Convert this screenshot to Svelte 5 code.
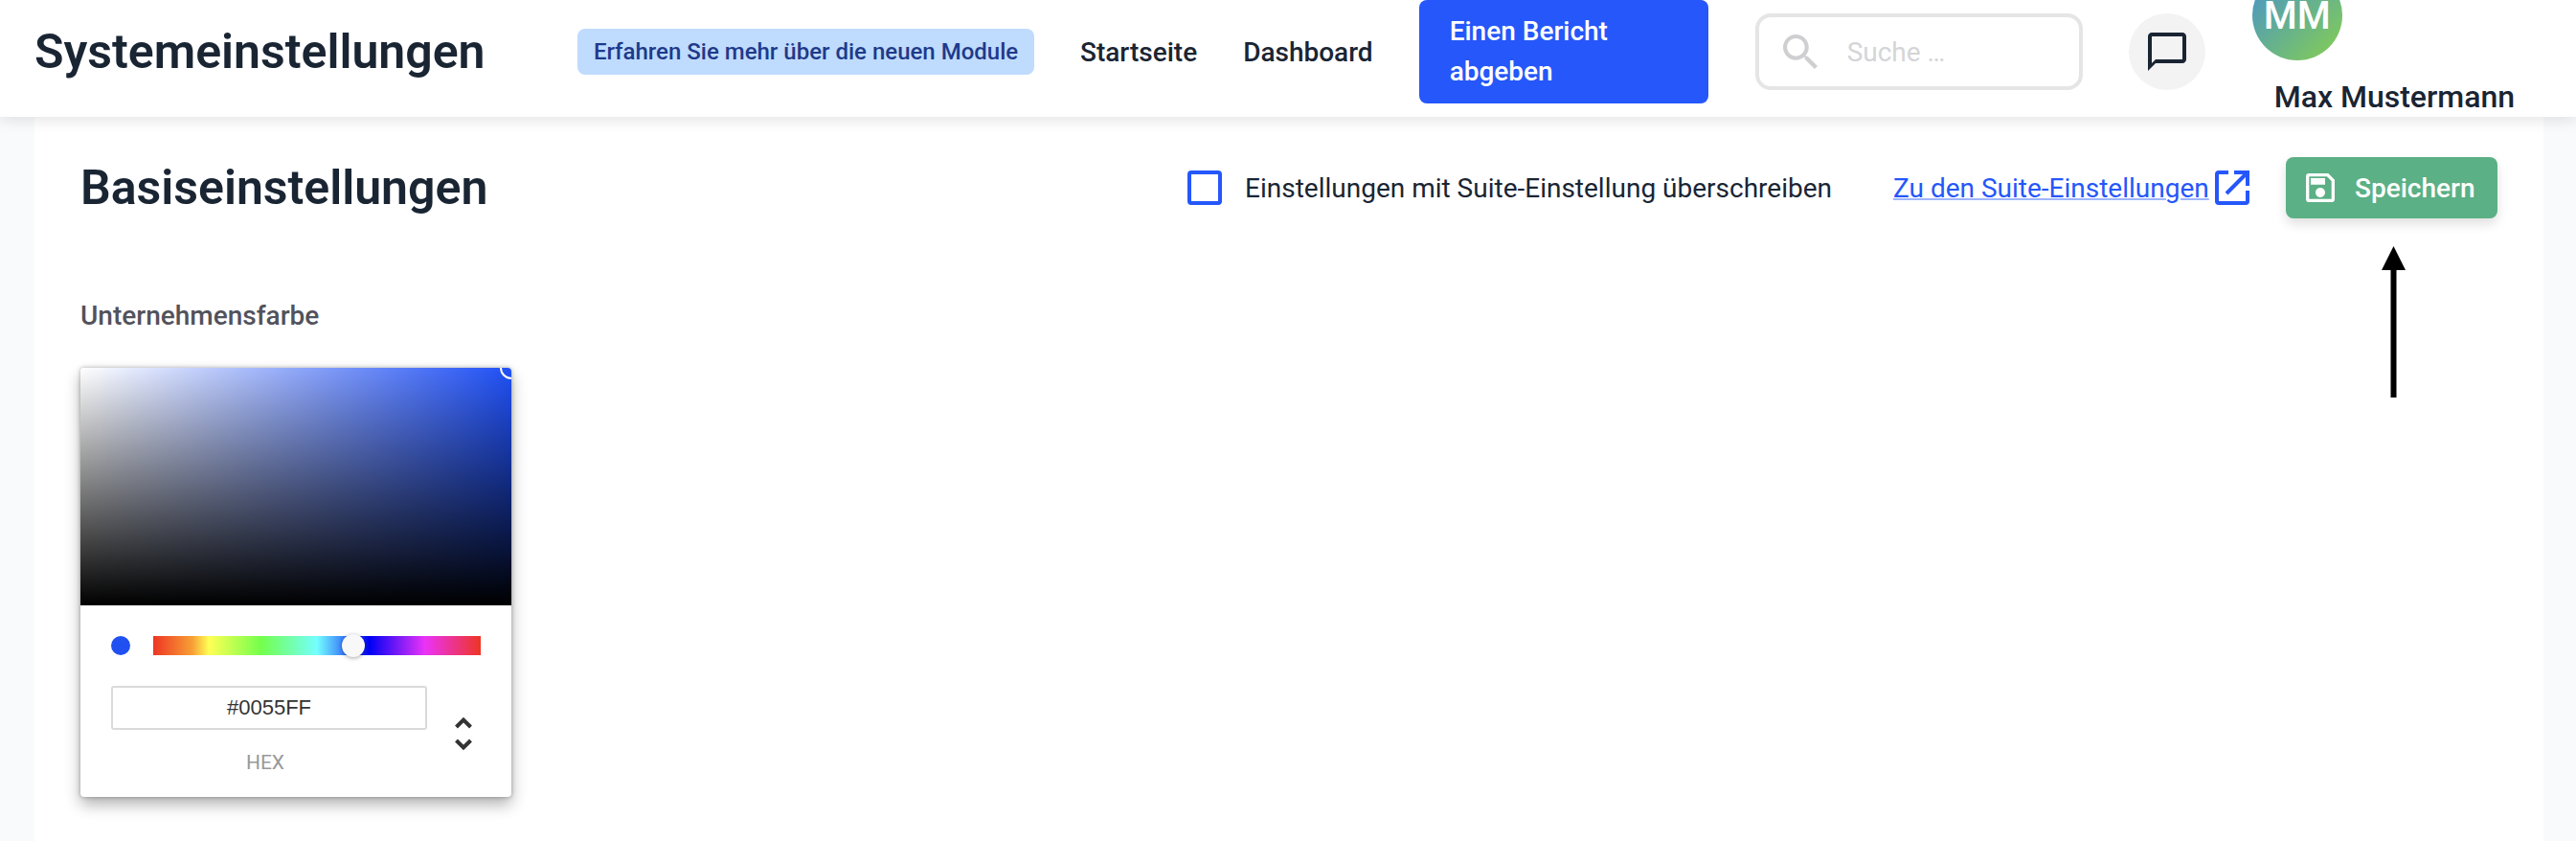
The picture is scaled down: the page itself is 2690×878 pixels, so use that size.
<script>
  const hueStops = "#ee3524, #f7a035 12%, #ffff55 17%, #73ff4c 33%, #74ffff 50%, #0000f5 66%, #ea33f7 83%, #ee3524";
</script>

<header class="topbar">
  <h1>Systemeinstellungen</h1>
  <a class="badge" href="#news">Erfahren Sie mehr über die neuen Module</a>
  <nav>
    <a href="#home">Startseite</a>
    <a href="#dashboard">Dashboard</a>
  </nav>
  <button class="report">Einen Bericht<br />abgeben</button>
  <div class="search">
    <svg viewBox="3 3 17.500 17.500" width="36" height="36" fill="#cfcfd2">
      <path d="M15.500 14h-.79l-.28-.27A6.471 6.471 0 0 0 16 9.500 6.500 6.500 0 1 0 9.500 16c1.610 0 3.090-.59 4.230-1.570l.27.28v.79l5 4.990L20.490 19l-4.990-5zm-6 0C7.010 14 5 11.990 5 9.500S7.010 5 9.500 5 14 7.010 14 9.500 11.990 14 9.500 14z" />
    </svg>
    <span>Suche …</span>
  </div>
  <button class="chat" aria-label="Nachrichten">
    <svg viewBox="0 0 24 24" width="48" height="48" fill="#1a2533">
      <path d="M20 2H4c-1.100 0-2 .9-2 2v18l4-4h14c1.100 0 2-.9 2-2V4c0-1.100-.9-2-2-2zm0 14H6l-2 2V4h16v12z" />
    </svg>
  </button>
  <div class="user">
    <div class="avatar">MM</div>
    <div class="name">Max Mustermann</div>
  </div>
</header>

<main>
  <section class="card">
    <div class="head">
      <h2>Basiseinstellungen</h2>
      <label class="override"><span class="box"></span>Einstellungen mit Suite-Einstellung überschreiben</label>
      <a class="suite" href="#suite">Zu den Suite-Einstellungen</a>
      <svg class="ext" viewBox="0 0 36 36" width="36" height="36" fill="none" stroke="#2557fa" stroke-width="4">
        <path d="M14 2H4a2 2 0 0 0-2 2v28a2 2 0 0 0 2 2h28a2 2 0 0 0 2-2V21" />
        <path d="M20 2h14v14M34 2L12 24" />
      </svg>
      <button class="save">
        <svg viewBox="3 3 18 18" width="30" height="30" fill="#fff">
          <path d="M17 3H5a2 2 0 0 0-2 2v14a2 2 0 0 0 2 2h14a2 2 0 0 0 2-2V7l-4-4zm2 16H5V5h11.170L19 7.830V19zm-7-7c-1.660 0-3 1.340-3 3s1.340 3 3 3 3-1.340 3-3-1.340-3-3-3zM6 6h9v4H6z" />
        </svg>
        Speichern
      </button>
    </div>

    <div class="field-label">Unternehmensfarbe</div>

    <div class="picker">
      <div class="saturation"><span class="handle"></span></div>
      <div class="controls">
        <div class="hue-row">
          <span class="dot"></span>
          <div class="hue" style="background: linear-gradient(to right, {hueStops})">
            <span class="thumb"></span>
          </div>
        </div>
        <div class="hex-row">
          <div class="hex">
            <div class="hex-input">#0055FF</div>
            <div class="hex-label">HEX</div>
          </div>
          <svg class="toggle" viewBox="0 0 18 42" width="18" height="42" fill="none" stroke="#333" stroke-width="4">
            <path d="M1.500 14L9 6.500 16.500 14M1.500 28L9 35.500 16.500 28" />
          </svg>
        </div>
      </div>
    </div>

    <svg class="arrow" viewBox="0 0 25 158" width="25" height="158">
      <path d="M12.500 0L25 25H15.500V158H9.500V25H0z" fill="#000" />
    </svg>
  </section>
</main>

<style>
  :global(body) {
    margin: 0;
    background: #f9fafb;
    font-family: Roboto, "Liberation Sans", sans-serif;
    color: #1a2533;
    height: 878px;
    overflow: hidden;
  }
  button {
    font-family: inherit;
    border: 0;
  }
  a {
    text-decoration: none;
    color: inherit;
  }

  .topbar {
    position: relative;
    z-index: 1;
    box-sizing: border-box;
    height: 122px;
    padding: 0 0 14px 36px;
    background: #fff;
    display: flex;
    align-items: center;
    box-shadow: 0 4px 14px rgba(0, 0, 0, 0.1);
  }
  h1 {
    margin: 0;
    width: 567px;
    font-size: 50px;
    font-weight: 600;
  }
  .badge {
    box-sizing: border-box;
    width: 477px;
    height: 48px;
    line-height: 48px;
    text-align: center;
    background: #bfdbfe;
    color: #1e3a8a;
    border-radius: 8px;
    font-size: 24px;
    font-weight: 500;
    white-space: nowrap;
  }
  nav {
    margin-left: 48px;
    display: flex;
    gap: 48px;
    font-size: 28px;
    font-weight: 500;
  }
  .report {
    box-sizing: border-box;
    margin-left: 48px;
    width: 302px;
    height: 108px;
    padding: 0 32px;
    background: #2557fa;
    color: #fff;
    border-radius: 8px;
    font-size: 28px;
    font-weight: 500;
    line-height: 42px;
    text-align: left;
  }
  .search {
    box-sizing: border-box;
    margin-left: 49px;
    width: 342px;
    height: 80px;
    border: 4px solid #e5e5e5;
    border-radius: 16px;
    display: flex;
    align-items: center;
    gap: 31px;
    padding-left: 25px;
    font-size: 28px;
    color: #d4d4d8;
  }
  .chat {
    margin-left: 48px;
    width: 80px;
    height: 80px;
    border-radius: 50%;
    background: #f3f3f3;
    display: flex;
    align-items: center;
    justify-content: center;
    padding: 0;
  }
  .user {
    align-self: flex-start;
    margin-top: -31px;
    margin-left: 49px;
    width: 280px;
    display: flex;
    flex-direction: column;
    align-items: flex-start;
  }
  .avatar {
    width: 94px;
    height: 94px;
    border-radius: 50%;
    background: linear-gradient(135deg, #4590d0, #86d04f);
    color: #fff;
    font-size: 40px;
    font-weight: 500;
    display: flex;
    align-items: center;
    justify-content: center;
  }
  .name {
    margin: 17px 0 0 23px;
    font-size: 32px;
    font-weight: 500;
    line-height: 42px;
    white-space: nowrap;
  }

  main {
    margin: 0 34px 0 36px;
  }
  .card {
    position: relative;
    background: #fff;
    height: 756px;
    padding: 0 48px;
    box-sizing: border-box;
  }
  .head {
    display: flex;
    align-items: center;
    height: 64px;
    padding-top: 42px;
  }
  h2 {
    margin: 0;
    width: 1156px;
    font-size: 50px;
    font-weight: 600;
    flex-shrink: 0;
  }
  .override {
    display: flex;
    align-items: center;
    gap: 24px;
    font-size: 28px;
    width: 737px;
    flex-shrink: 0;
    white-space: nowrap;
  }
  .box {
    box-sizing: border-box;
    width: 36px;
    height: 36px;
    border: 4px solid #2557fa;
    border-radius: 4px;
  }
  .suite {
    font-size: 28px;
    color: #2557fa;
    text-decoration: underline;
    text-decoration-color: #9fb5fc;
    text-decoration-thickness: 2px;
    width: 329px;
    flex-shrink: 0;
    white-space: nowrap;
  }
  .ext {
    margin-left: 7px;
    flex-shrink: 0;
  }
  .save {
    margin-left: 38px;
    box-sizing: border-box;
    width: 221px;
    height: 64px;
    background: #5bb085;
    color: #fff;
    border-radius: 8px;
    display: flex;
    align-items: center;
    gap: 21px;
    padding-left: 21px;
    font-size: 28px;
    font-weight: 500;
    box-shadow: 0 6px 12px rgba(0, 0, 0, 0.12);
    flex-shrink: 0;
  }

  .field-label {
    margin-top: 84px;
    line-height: 36px;
    font-size: 28px;
    font-weight: 500;
    color: #52525b;
  }

  .picker {
    margin-top: 36px;
    width: 450px;
    height: 448px;
    background: #fff;
    border-radius: 4px;
    overflow: hidden;
    box-shadow: 0 0 4px rgba(0, 0, 0, 0.3), 0 8px 16px rgba(0, 0, 0, 0.3);
    font-family: "Liberation Sans", Arial, sans-serif;
  }
  .saturation {
    position: relative;
    height: 248px;
    overflow: hidden;
    background:
      linear-gradient(to top, #000, rgba(0, 0, 0, 0)),
      linear-gradient(to right, #fff, #2050f5);
  }
  .handle {
    position: absolute;
    top: -12px;
    right: -12px;
    width: 20px;
    height: 20px;
    border: 2px solid #fff;
    border-radius: 50%;
  }
  .controls {
    padding: 32px 32px 0;
  }
  .hue-row {
    display: flex;
    align-items: center;
    gap: 24px;
  }
  .dot {
    width: 20px;
    height: 20px;
    border-radius: 50%;
    background: #2050f0;
  }
  .hue {
    position: relative;
    width: 342px;
    height: 20px;
  }
  .thumb {
    position: absolute;
    left: 197px;
    top: -2px;
    width: 24px;
    height: 24px;
    border-radius: 50%;
    background: #f8f8f8;
    box-shadow: 0 1px 4px rgba(0, 0, 0, 0.35);
  }
  .hex-row {
    margin-top: 32px;
    display: flex;
    align-items: flex-start;
  }
  .hex {
    width: 330px;
  }
  .hex-input {
    box-sizing: border-box;
    height: 46px;
    line-height: 42px;
    border: 2px solid #dadada;
    border-radius: 3px;
    text-align: center;
    font-size: 22px;
    color: #333;
  }
  .hex-label {
    margin-top: 22px;
    padding-right: 8px;
    text-align: center;
    font-family: Roboto, sans-serif;
    font-size: 21px;
    color: #999;
  }
  .toggle {
    margin: 29px 0 0 29px;
  }
  .arrow {
    position: absolute;
    left: 2451px;
    top: 135px;
  }
</style>
